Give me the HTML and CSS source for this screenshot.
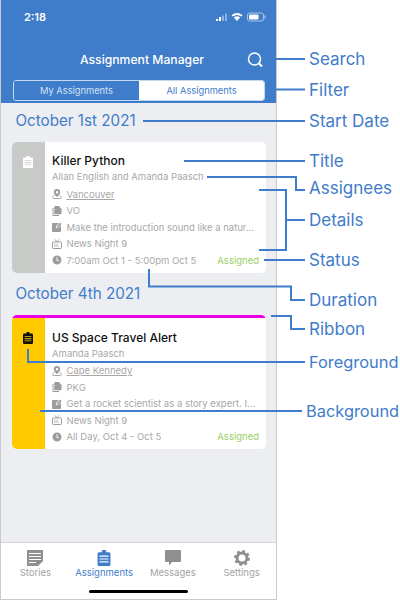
FILE: index.html
```html
<!DOCTYPE html>
<html>
<head>
<meta charset="UTF-8">
<title>Assignment Manager</title>
<link rel="stylesheet" href="styles.css">
</head>
<body>
<svg class="defs" width="0" height="0">
<symbol id="clip" viewBox="0 0 10 12">
<path fill="currentColor" fill-rule="evenodd" d="M3.4 1.6V.9Q3.4 0 4.2 0h1.6q.8 0 .8.9v.7h2.2q1.2 0 1.2 1.2v8Q10 12 8.800 12H1.200Q0 12 0 10.800v-8Q0 1.600 1.200 1.600zM1.600 4.200v.9h6.800v-.9zM1.600 6.300v.9h6.800v-.9zM1.600 8.400v.9h6.800v-.9z"/>
</symbol>
<symbol id="pin" viewBox="0 0 10 10">
<path fill="currentColor" fill-rule="evenodd" d="M5 0a3.200 3.200 0 0 1 3.200 3.200C8.200 5 6 7.200 5 8 4 7.200 1.800 5 1.800 3.200A3.200 3.200 0 0 1 5 0zm0 2a1.200 1.200 0 1 0 0 2.400A1.200 1.200 0 0 0 5 2z"/>
<path fill="none" stroke="currentColor" stroke-width=".9" d="M2.400 6.600C1 7.100.5 7.900.5 8.500c0 .6.500 1 1.200 1h6.600c.7 0 1.200-.4 1.200-1 0-.6-.5-1.400-1.900-1.900"/>
</symbol>
<symbol id="docs" viewBox="0 0 10 10">
<path fill="currentColor" d="M3 0h3.600L9.500 2.800v4.700q0 .7-.7.700H3q-.7 0-.7-.7V.7Q2.300 0 3 0z"/>
<path fill="currentColor" d="M.5 2h1v6.500q0 .5.500.500h5v1H1.200Q.5 10 .5 9.300z"/>
</symbol>
<symbol id="edit" viewBox="0 0 10 10">
<path fill="currentColor" d="M.8 1H7L4.400 3.600 3.600 6.400 6.400 5.600 9 3v6.200q0 .8-.8.800H.8Q0 10 0 9.200V1.800Q0 1 .8 1z"/>
<path fill="currentColor" d="M8.200.6 9.600 2 5.800 5.200 4.500 5.500 4.800 4.200z"/>
</symbol>
<symbol id="tv" viewBox="0 0 10 10">
<rect x=".5" y="2.900" width="9" height="6.600" rx=".8" fill="none" stroke="currentColor"/>
<path fill="none" stroke="currentColor" stroke-width=".9" d="M2.800.3 5 2.800 7.200.3"/>
<rect x="2" y="4.500" width="4.500" height="3.500" fill="currentColor" opacity=".35"/>
</symbol>
<symbol id="clock" viewBox="0 0 10 10">
<path fill="currentColor" fill-rule="evenodd" d="M5 .5a4.500 4.500 0 1 1 0 9 4.500 4.500 0 0 1 0-9zM4.500 2.200v3.200l2.400 1.200.4-.8-1.900-.9V2.200z"/>
</symbol>
</svg>

<div class="phone">
<header class="top">
<div class="status">
<span class="time">2:18</span>
<svg class="status-icons" width="50" height="10" viewBox="0 0 50 10">
<rect x="0" y="7" width="2" height="2" fill="#fff"/>
<rect x="3" y="5" width="2" height="4" fill="#fff"/>
<rect x="6" y="3.500" width="2" height="5.500" fill="#8fb4e2"/>
<rect x="9" y="1.500" width="2" height="7.500" fill="#8fb4e2"/>
<path fill="#fff" d="M21 9 17.800 5.600Q21 3 24.200 5.600zM16.800 4.600 15.500 3.200Q21-1 26.500 3.200L25.200 4.600Q21 1.400 16.800 4.600z"/>
<rect x="31.500" y="1" width="16" height="8" rx="2" fill="none" stroke="#a9c6ea"/>
<rect x="33" y="2.500" width="9.500" height="5" rx="1" fill="#fff"/>
<rect x="48.300" y="3.500" width="1.200" height="3" fill="#a9c6ea"/>
</svg>
</div>
<div class="nav">
<h1>Assignment Manager</h1>
<svg class="search" width="17" height="15" viewBox="0 0 17 15">
<circle cx="7.500" cy="7" r="6" fill="none" stroke="#fff" stroke-width="1.500"/>
<path d="M11.800 11.300 15 14.500" stroke="#fff" stroke-width="2" fill="none"/>
</svg>
</div>
<div class="segment">
<div class="seg seg-off">My Assignments</div>
<div class="seg seg-on">All Assignments</div>
</div>
</header>

<main class="list">
<h2 class="date">October 1st 2021</h2>
<div class="card">
<div class="card-main">
<div class="strip strip-grey"><svg class="strip-icon"><use href="#clip"/></svg></div>
<div class="card-body">
<div class="title">Killer Python</div>
<div class="people">Allan English and Amanda Paasch</div>
<div class="row"><svg class="ico"><use href="#pin"/></svg><span class="link">Vancouver</span></div>
<div class="row"><svg class="ico"><use href="#docs"/></svg><span>VO</span></div>
<div class="row"><svg class="ico"><use href="#edit"/></svg><span>Make the introduction sound like a natur...</span></div>
<div class="row"><svg class="ico"><use href="#tv"/></svg><span>News Night 9</span></div>
<div class="row"><svg class="ico"><use href="#clock"/></svg><span>7:00am Oct 1 - 5:00pm Oct 5</span><span class="state">Assigned</span></div>
</div>
</div>
</div>

<h2 class="date">October 4th 2021</h2>
<div class="card">
<div class="ribbon"></div>
<div class="card-main">
<div class="strip strip-yellow"><svg class="strip-icon"><use href="#clip"/></svg></div>
<div class="card-body">
<div class="title">US Space Travel Alert</div>
<div class="people">Amanda Paasch</div>
<div class="row"><svg class="ico"><use href="#pin"/></svg><span class="link">Cape Kennedy</span></div>
<div class="row"><svg class="ico"><use href="#docs"/></svg><span>PKG</span></div>
<div class="row"><svg class="ico"><use href="#edit"/></svg><span>Get a rocket scientist as a story expert. I...</span></div>
<div class="row"><svg class="ico"><use href="#tv"/></svg><span>News Night 9</span></div>
<div class="row"><svg class="ico"><use href="#clock"/></svg><span>All Day, Oct 4 - Oct 5</span><span class="state">Assigned</span></div>
</div>
</div>
</div>
</main>

<nav class="tabs">
<div class="tab">
<svg class="tab-icon" viewBox="0 0 16 16">
<path fill="currentColor" fill-rule="evenodd" d="M0 0h16v11l-5 5H0zM2 3v1h12V3zM2 6v1h12V6zM2 9v1h12V9zM2 12v1h7v-1z"/>
</svg>
<span>Stories</span>
</div>
<div class="tab tab-on">
<svg class="tab-icon" viewBox="0 0 10 12"><use href="#clip"/></svg>
<span>Assignments</span>
</div>
<div class="tab">
<svg class="tab-icon" viewBox="0 0 16 16">
<path fill="currentColor" d="M1 0h14q1 0 1 1v10q0 1-1 1H7l-3 3.500V12H1q-1 0-1-1V1q0-1 1-1z"/>
</svg>
<span>Messages</span>
</div>
<div class="tab">
<svg class="tab-icon" viewBox="0 0 16 16">
<circle cx="8" cy="8" r="5" fill="none" stroke="currentColor" stroke-width="3"/>
<circle cx="8" cy="8" r="6.800" fill="none" stroke="currentColor" stroke-width="2.400" stroke-dasharray="2.700 2.640"/>
</svg>
<span>Settings</span>
</div>
</nav>
<div class="home-bar"><div class="home-pill"></div></div>
</div>

<svg class="lines" width="400" height="600" viewBox="0 0 400 600">
<path d="M265 59H305M270 89.500H305M143 121H305M184 161H305M207 177H296V190H305M259 190H286V250H259M286 220H305M264 260H305M149 269V286.500H291V300H305M271 316H291V329H305M28 349V362H305M40 411H302"/>
</svg>
<span class="tag tag-search">Search</span>
<span class="tag tag-filter">Filter</span>
<span class="tag tag-start">Start Date</span>
<span class="tag tag-title">Title</span>
<span class="tag tag-assignees">Assignees</span>
<span class="tag tag-details">Details</span>
<span class="tag tag-status">Status</span>
<span class="tag tag-duration">Duration</span>
<span class="tag tag-ribbon">Ribbon</span>
<span class="tag tag-foreground">Foreground</span>
<span class="tag tag-background">Background</span>
</body>
</html>
```

FILE: styles.css
```css
html,body{margin:0;padding:0;}
body{position:relative;width:400px;height:600px;overflow:hidden;background-color:#fff;
font-family:Inter,"Liberation Sans",sans-serif;}
.defs{position:absolute;}

.phone{display:flex;flex-direction:column;width:275px;height:599px;
border:1px solid #c9cacc;border-top:none;background-color:#eceef2;}

.top{height:103px;background-color:#3f7cc9;color:#fff;}
.status{display:flex;justify-content:space-between;align-items:center;height:34px;padding:0 10px 0 23px;}
.time{font-size:11px;font-weight:600;}
.nav{display:flex;justify-content:center;align-items:center;position:relative;height:50px;padding-left:7px;}
h1{margin:0;font-size:12.2px;font-weight:500;}
.search{position:absolute;left:246px;top:18px;}
.segment{display:flex;height:19px;margin:-4px 11px 0 12px;border:1px solid #c5d8f0;border-radius:3px;overflow:hidden;font-size:9.3px;}
.seg{flex:1;display:flex;align-items:center;justify-content:center;}
.seg-off{background-color:#3f7cc9;color:#d5e3f5;}
.seg-on{background-color:#fff;color:#3f7cc9;}

.list{flex:1;padding:8px 10px 0 10.5px;}
.date{margin:0 0 10.5px 4px;font-size:15.2px;font-weight:400;line-height:20px;color:#3f7cc9;}
.card{margin-bottom:11.5px;background-color:#fff;border-radius:5px;overflow:hidden;}
.card-main{display:flex;}
.ribbon{height:3.5px;background-color:#ee00e6;}
.strip{width:33.5px;flex-shrink:0;display:flex;justify-content:center;padding-top:14px;}
.strip-grey{background-color:#c8cac8;color:#fff;}
.strip-yellow{background-color:#ffcb00;color:#111;}
.strip-icon{width:10px;height:12px;}
.card-body{flex:1;min-width:0;padding:10.5px 7px 4px 7px;}
.title{font-size:12px;font-weight:500;line-height:18px;color:#111;}
.people{font-size:9.5px;line-height:14px;margin-bottom:2px;color:#a8a8a8;}
.row{display:flex;align-items:center;height:16.5px;font-size:9.5px;color:#a8a8a8;white-space:nowrap;}
.ico{width:10px;height:10px;margin-right:4.5px;flex-shrink:0;color:#9c9c9c;}
.link{text-decoration:underline;}
.state{margin-left:auto;color:#9ccf62;}

.tabs{display:grid;grid-template-columns:repeat(4,1fr);height:46px;background-color:#fff;border-top:1px solid #d3d4d6;box-sizing:border-box;}
.tab{display:flex;flex-direction:column;align-items:center;padding-top:7px;font-size:9.5px;color:#a2a2a2;}
.tab-on{color:#3f7cc9;}
.tab-icon{width:16px;height:16px;margin-bottom:1px;color:#8f8f8f;}
.tab-on .tab-icon{color:#3f7cc9;}
.home-bar{height:11px;background-color:#fff;display:flex;justify-content:center;}
.home-pill{width:99px;height:3px;margin-top:2px;border-radius:2px;background-color:#000;}

.lines{position:absolute;left:0;top:0;}
.lines path{fill:none;stroke:#3f7cc9;stroke-width:2;}
.tag{position:absolute;left:309px;font-size:17px;line-height:22px;color:#3f7cc9;white-space:nowrap;}
.tag-search{top:48px;}
.tag-filter{top:79px;}
.tag-start{top:110px;}
.tag-title{top:150px;}
.tag-assignees{top:177px;}
.tag-details{top:209px;}
.tag-status{top:249px;}
.tag-duration{top:289px;}
.tag-ribbon{top:318px;}
.tag-foreground{top:351px;font-size:16.4px;}
.tag-background{top:400px;left:306px;font-size:16.4px;}
```
